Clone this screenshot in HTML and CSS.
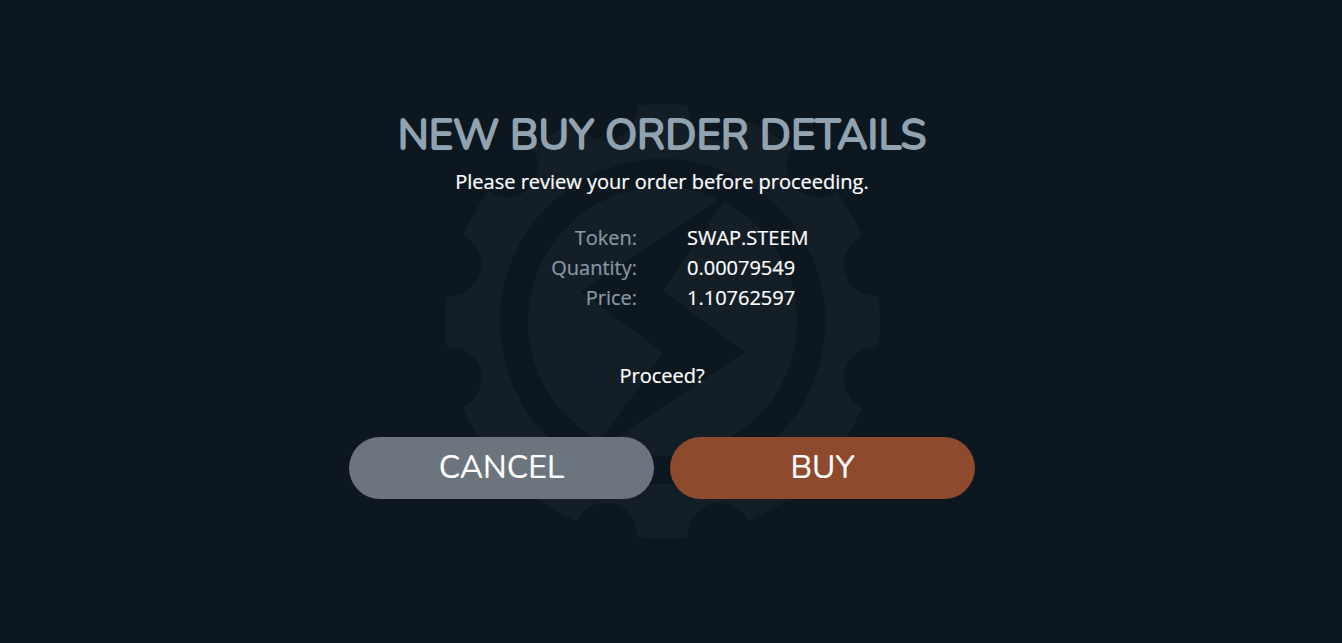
FILE: index.html
```
<!DOCTYPE html>
<html lang="en">
<head>
    <meta charset="UTF-8">
    <meta name="viewport" content="width=device-width, initial-scale=1.0">
    <title>New Buy Order Details</title>
    <link rel="stylesheet" href="styles.css">
</head>
<body>
    <main>
        <svg class="gear" viewBox="-217.5 -217.5 435 435" aria-hidden="true">
            <defs>
                <circle id="notch" cx="220" cy="0" r="31.3"/>
            </defs>
            <circle class="light" r="217.5"/>
            <g class="dark">
                <use href="#notch" transform="rotate(15)"/>
                <use href="#notch" transform="rotate(45)"/>
                <use href="#notch" transform="rotate(75)"/>
                <use href="#notch" transform="rotate(105)"/>
                <use href="#notch" transform="rotate(135)"/>
                <use href="#notch" transform="rotate(165)"/>
                <use href="#notch" transform="rotate(195)"/>
                <use href="#notch" transform="rotate(225)"/>
                <use href="#notch" transform="rotate(255)"/>
                <use href="#notch" transform="rotate(285)"/>
                <use href="#notch" transform="rotate(315)"/>
                <use href="#notch" transform="rotate(345)"/>
                <circle r="162.7"/>
            </g>
            <circle class="light" r="134.7"/>
            <path class="dark" d="M69-131L-82-30L0 30.5L-69 131L82 30.5L.5-30.5z"/>
        </svg>
        <div class="order">
            <h1>NEW BUY ORDER DETAILS</h1>
            <p>Please review your order before proceeding.</p>
            <dl>
                <dt>Token:</dt><dd>SWAP.STEEM</dd>
                <dt>Quantity:</dt><dd>0.00079549</dd>
                <dt>Price:</dt><dd>1.10762597</dd>
            </dl>
            <p>Proceed?</p>
            <div class="buttons">
                <button class="cancel">CANCEL</button>
                <button class="buy">BUY</button>
            </div>
        </div>
    </main>
</body>
</html>
```
FILE: styles.css
```
* {box-sizing: border-box;}
body {
    margin: 0;
    background-color: #0d171f;
    color: #fff;
    font: 20px/30px "Open Sans", sans-serif;
    -webkit-text-stroke: .2px;
}
main {
    position: relative;
    width: 1324px;
    height: 643px;
    overflow: hidden;
}
.gear {
    position: absolute;
    top: 104px;
    left: 445px;
    width: 435px;
    height: 435px;
}
.light {fill: #141e26;}
.dark {fill: #0d171f;}
.order {position: relative; padding-top: 109px; text-align: center;}
h1 {
    margin: 0 0 4px;
    color: #91a2b0;
    font: 400 42px/54px Nunito, sans-serif;
    -webkit-text-stroke: 1.8px #91a2b0;
}
p {margin: 0;}
dl {
    display: grid;
    grid-template-columns: 1fr 1fr;
    column-gap: 50px;
    margin: 26px 0 48px;
}
dt {text-align: right; color: #8a98a5;}
dd {margin: 0; text-align: left;}
.buttons {
    display: flex;
    justify-content: center;
    gap: 16px;
    margin-top: 46px;
}
button {
    width: 305px;
    height: 62px;
    padding: 0;
    border: 0;
    border-radius: 31px;
    color: #fff;
    font: 400 32px/60px Nunito, sans-serif;
    -webkit-text-stroke: .2px;
}
.cancel {background-color: #6c757d;}
.buy {background-color: #8d4a2d;}
```
